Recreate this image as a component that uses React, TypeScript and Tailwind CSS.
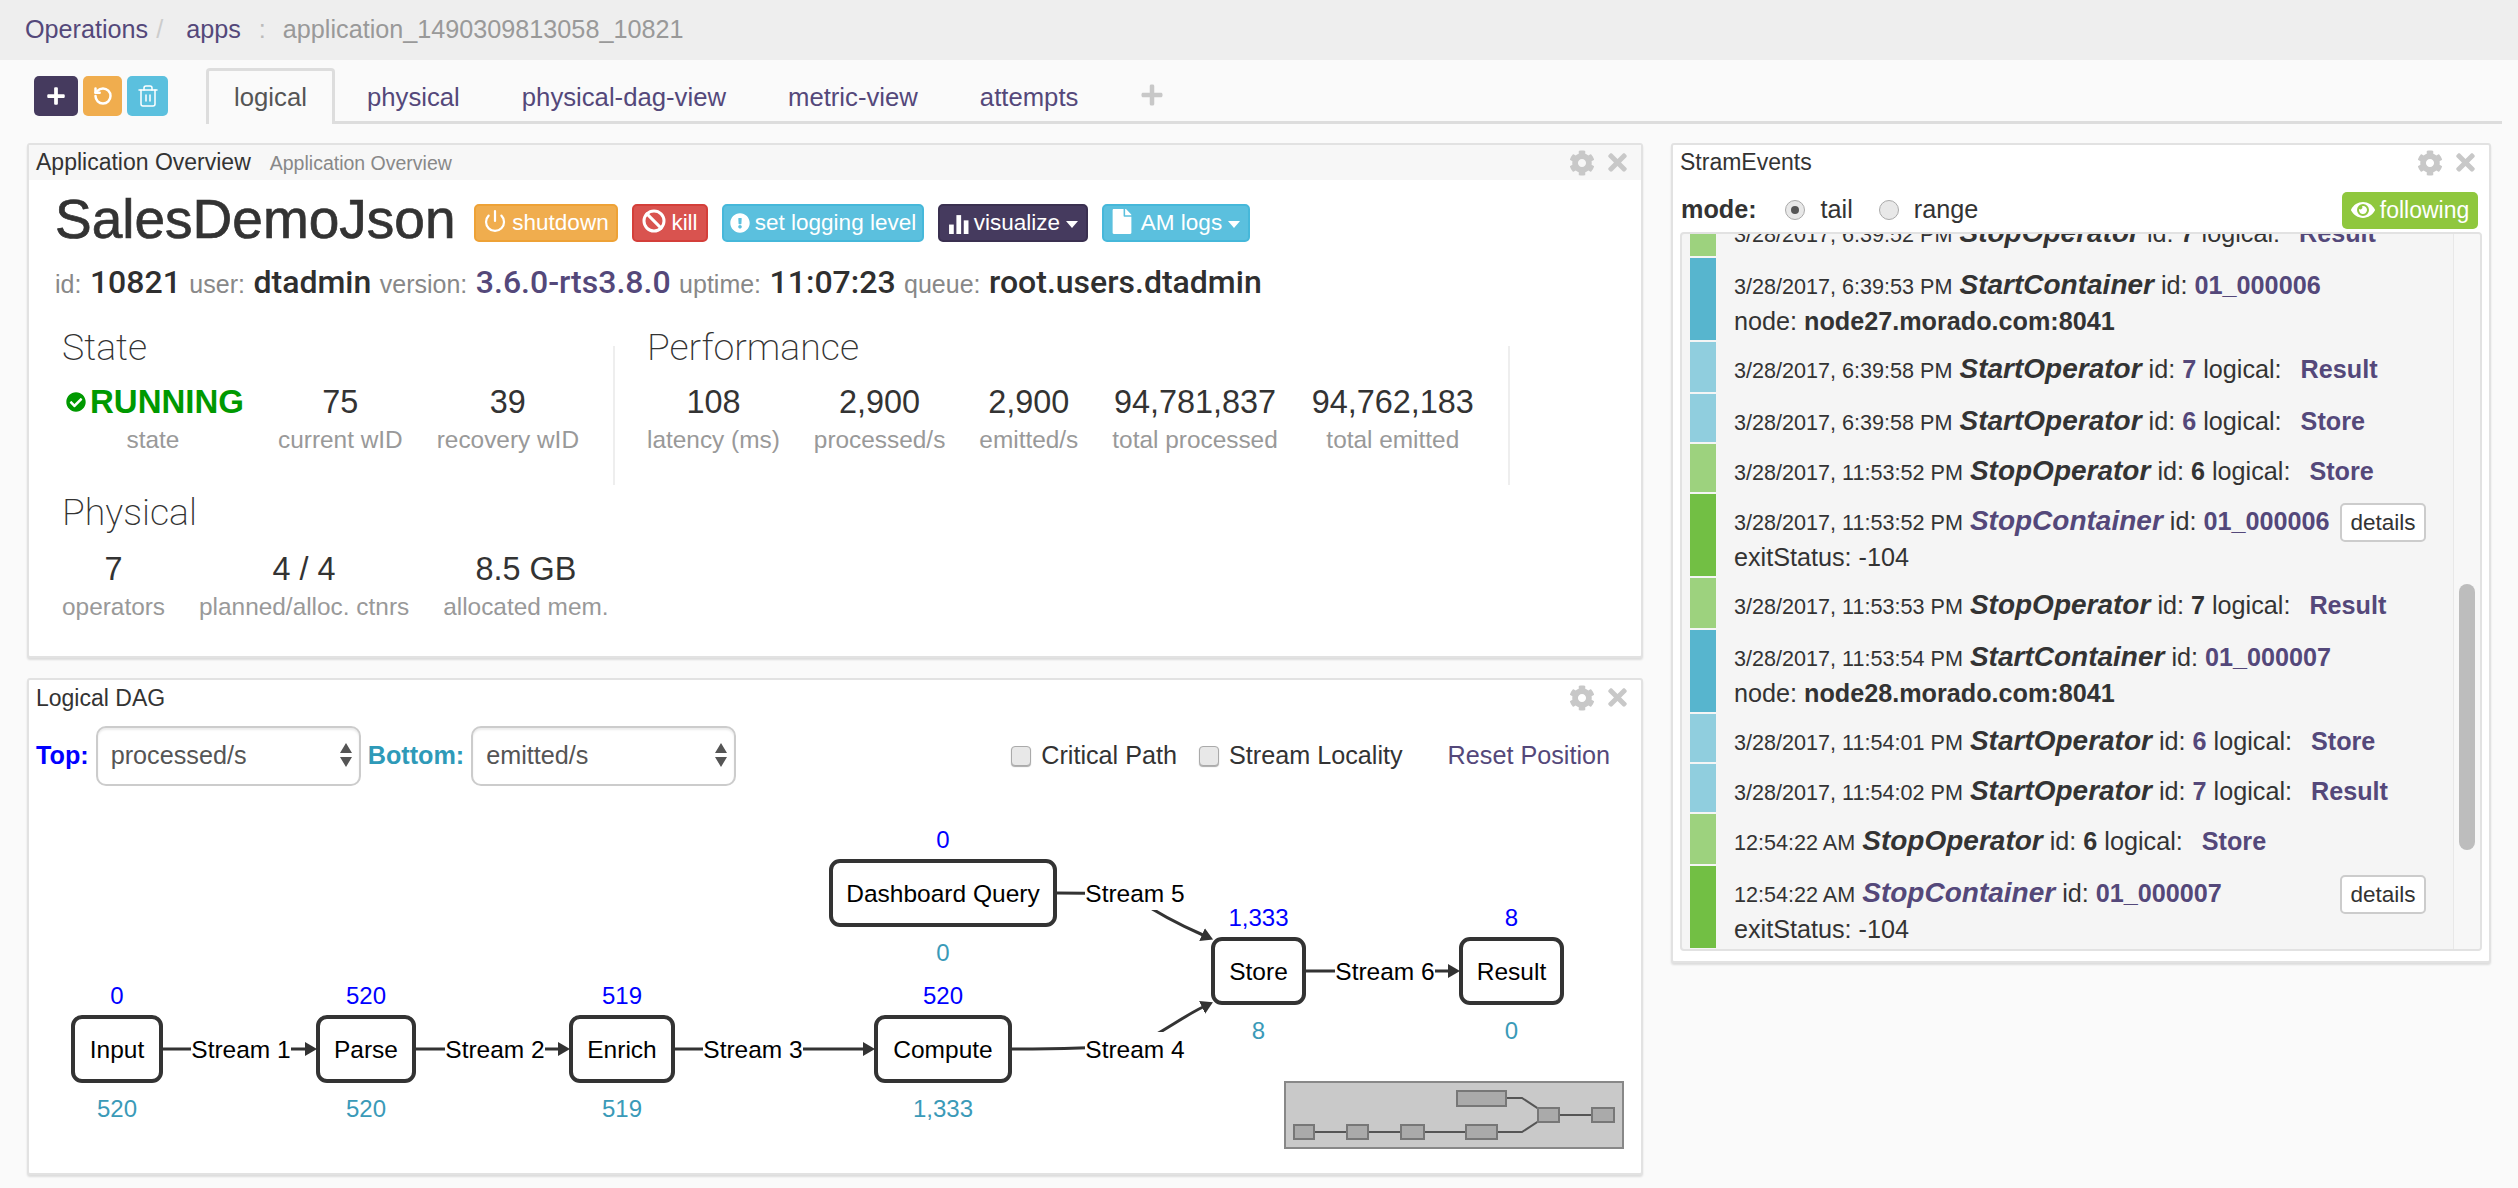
import React from "react";
import { Ban, Power, RotateCcw, Trash2 } from "lucide-react";
import { FaCheckCircle, FaCog, FaExclamationCircle, FaEye, FaFile, FaPlus, FaTimes } from "react-icons/fa";

const Caret = () => <span className="ml-[6px] inline-block h-0 w-0 border-x-[6px] border-t-[7px] border-x-transparent border-t-white align-middle" />;

const PanelTools = () => (
  <div className="flex items-center gap-[9px] text-[#c8c8c8]">
    <FaCog className="h-[26px] w-[26px]" />
    <FaTimes className="h-[27px] w-[27px]" />
  </div>
);

const ActionButton = ({ bg, children }: { bg: string; children: React.ReactNode }) => (
  <button className={`flex h-[38px] items-center justify-center gap-[5px] whitespace-nowrap rounded-[5px] border-2 text-[22.5px] text-white ${bg}`}>
    {children}
  </button>
);

const Stat = ({ value, label }: { value: React.ReactNode; label: string }) => (
  <div className="flex flex-col items-center whitespace-nowrap">
    <div className="flex h-[46px] items-center text-[32.4px] text-[#333]">{value}</div>
    <div className="text-[24.4px] leading-[30px] text-[#999]">{label}</div>
  </div>
);

const Heading = ({ children }: { children: React.ReactNode }) => (
  <h3 className="font-['Roboto',sans-serif] text-[37.5px] font-extralight leading-[44px] text-[#333]">{children}</h3>
);

const Divider = () => <div className="mt-[21px] h-[139px] w-[2px] bg-[#eee]" />;

const InfoLabel = ({ children }: { children: React.ReactNode }) => <span className="text-[25px] text-[#888]">{children}</span>;
const InfoValue = ({ children, purple }: { children: React.ReactNode; purple?: boolean }) => (
  <span className={`font-['Roboto',sans-serif] text-[32px] font-medium ${purple ? "text-[#54487a]" : "text-[#2f2f2f]"}`}>{children}</span>
);

const ApplicationOverview = () => (
  <section className="h-[515px] rounded-[3px] border-2 border-[#e2e2e2] bg-white shadow-[0_2px_2px_#ddd]">
    <header className="flex h-[35px] items-center justify-between bg-[#f7f7f7] pl-[7px] pr-[10px]">
      <div className="flex items-baseline gap-[19px]">
        <span className="text-[23px] text-[#333]">Application Overview</span>
        <span className="text-[19.5px] text-[#888]">Application Overview</span>
      </div>
      <PanelTools />
    </header>
    <div className="px-[26px] pt-[12px]">
      <div className="flex h-[62px] items-center gap-[14px]">
        <h1 className="mr-[4px] w-[401px] -translate-y-[4px] whitespace-nowrap text-[55px] leading-[62px] text-[#333] [-webkit-text-stroke:0.7px_#333]">SalesDemoJson</h1>
        <div className="w-[144px]"><ActionButton bg="w-full border-[#eea236] bg-[#f0ad4e]"><Power className="h-[24px] w-[24px] -translate-y-[2px]" strokeWidth={2.2} />shutdown</ActionButton></div>
        <div className="w-[76px]"><ActionButton bg="w-full border-[#d43f3a] bg-[#d9534f]"><Ban className="h-[24px] w-[24px] -translate-y-[2px]" strokeWidth={3} />kill</ActionButton></div>
        <div className="w-[202px]"><ActionButton bg="w-full border-[#46b8da] bg-[#5bc0de]"><FaExclamationCircle className="h-[20px] w-[20px]" />set logging level</ActionButton></div>
        <div className="w-[150px]"><ActionButton bg="w-full border-[#3a3050] bg-[#453a5e]">
          <svg viewBox="0 0 20 20" className="h-[21px] w-[21px]" fill="white">
            <rect x="1" y="11" width="4.5" height="9" />
            <rect x="8" y="2" width="4.5" height="18" />
            <rect x="15" y="7" width="4.5" height="13" />
          </svg>
          <span>visualize<Caret /></span>
        </ActionButton></div>
        <div className="w-[148px]"><ActionButton bg="w-full border-[#46b8da] bg-[#5bc0de]"><FaFile className="h-[25px] w-[20px] -translate-y-[2px]" /><span className="ml-[4px]">AM logs<Caret /></span></ActionButton></div>
      </div>
      <div className="mt-[4px] flex items-baseline gap-[8.5px] whitespace-nowrap">
        <InfoLabel>id:</InfoLabel><InfoValue>10821</InfoValue>
        <InfoLabel>user:</InfoLabel><InfoValue>dtadmin</InfoValue>
        <InfoLabel>version:</InfoLabel><InfoValue purple>3.6.0-rts3.8.0</InfoValue>
        <InfoLabel>uptime:</InfoLabel><InfoValue>11:07:23</InfoValue>
        <InfoLabel>queue:</InfoLabel><InfoValue>root.users.dtadmin</InfoValue>
      </div>
      <div className="mt-[19px] flex pl-[7px]">
        <div className="w-[551px]">
          <Heading>State</Heading>
          <div className="mt-[10px] flex gap-[34px]">
            <Stat value={<span className="ml-[4px] flex items-center gap-[4px] font-bold text-[#090]"><FaCheckCircle className="h-[20px] w-[20px]" /><span className="text-[33px]">RUNNING</span></span>} label="state" />
            <Stat value="75" label="current wID" />
            <Stat value="39" label="recovery wID" />
          </div>
        </div>
        <Divider />
        <div className="ml-[32px] w-[861px]">
          <Heading>Performance</Heading>
          <div className="mt-[10px] flex gap-[34px]">
            <Stat value="108" label="latency (ms)" />
            <Stat value="2,900" label="processed/s" />
            <Stat value="2,900" label="emitted/s" />
            <Stat value="94,781,837" label="total processed" />
            <Stat value="94,762,183" label="total emitted" />
          </div>
        </div>
        <Divider />
      </div>
      <div className="mt-[5px] pl-[7px]">
        <Heading>Physical</Heading>
        <div className="mt-[12px] flex gap-[34px]">
          <Stat value="7" label="operators" />
          <Stat value="4 / 4" label="planned/alloc. ctnrs" />
          <Stat value="8.5 GB" label="allocated mem." />
        </div>
      </div>
    </div>
  </section>
);

const SelectBox = ({ value, options }: { value: string; options: string[] }) => (
  <div className="relative">
    <select defaultValue={value} className="h-[60px] w-[265px] appearance-none rounded-[10px] border-2 border-[#ccc] bg-white pl-[13px] text-[25.2px] text-[#555] shadow-[inset_0_2px_2px_rgba(0,0,0,0.08)]">
      {options.map((o) => <option key={o}>{o}</option>)}
    </select>
    <svg viewBox="0 0 12 24" className="pointer-events-none absolute right-[9px] top-[17px] h-[24px] w-[12px]" fill="#555">
      <path d="M6 0 L12 10 L0 10 Z M6 24 L12 14 L0 14 Z" />
    </svg>
  </div>
);

const CheckItem = ({ label }: { label: string }) => (
  <label className="flex items-center gap-[10px] text-[25.2px] text-[#333]">
    <input type="checkbox" className="h-[20px] w-[20px] appearance-none rounded-[4px] border border-[#aaa] bg-[#e8e8e8] shadow-[0_1px_1px_#aaa]" />
    {label}
  </label>
);

const NODES = [
  { name: "Input", x: 71, y: 1015, w: 92, top: "0", bottom: "520" },
  { name: "Parse", x: 316, y: 1015, w: 100, top: "520", bottom: "520" },
  { name: "Enrich", x: 569, y: 1015, w: 106, top: "519", bottom: "519" },
  { name: "Compute", x: 874, y: 1015, w: 138, top: "520", bottom: "1,333" },
  { name: "Dashboard Query", x: 829, y: 859, w: 228, top: "0", bottom: "0" },
  { name: "Store", x: 1211, y: 937, w: 95, top: "1,333", bottom: "8" },
  { name: "Result", x: 1459, y: 937, w: 105, top: "8", bottom: "0" },
];

const STREAMS = [
  { name: "Stream 1", x: 241, y: 1049, d: "M163 1049 L306 1049" },
  { name: "Stream 2", x: 495, y: 1049, d: "M416 1049 L559 1049" },
  { name: "Stream 3", x: 753, y: 1049, d: "M675 1049 L864 1049" },
  { name: "Stream 4", x: 1135, y: 1049, d: "M1012 1049 C1060 1049 1095 1048 1135 1045 C1160 1035 1180 1018 1203 1007" },
  { name: "Stream 5", x: 1135, y: 893, d: "M1057 893 C1090 893 1120 893 1135 898 C1160 915 1180 925 1203 935" },
  { name: "Stream 6", x: 1385, y: 971, d: "M1306 971 L1449 971" },
];

const MINI = [
  [1457, 1091, 49, 15],
  [1538, 1108, 21, 14],
  [1592, 1108, 22, 14],
  [1294, 1125, 20, 14],
  [1347, 1125, 21, 14],
  [1401, 1125, 23, 14],
  [1466, 1125, 31, 14],
];

const DagGraph = () => (
  <svg viewBox="29 800 1612 373" className="block h-[373px] w-[1612px]">
    <defs>
      <marker id="head" markerWidth="12" markerHeight="14" refX="1" refY="7" orient="auto" markerUnits="userSpaceOnUse">
        <path d="M0 0 L12 7 L0 14 Z" fill="#333" />
      </marker>
    </defs>
    {STREAMS.map((s) => (
      <g key={s.name}>
        <path d={s.d} fill="none" stroke="#333" strokeWidth="3" markerEnd="url(#head)" />
        <rect x={s.x - 50} y={s.y - 17} width="100" height="34" fill="white" />
        <text x={s.x} y={s.y + 9} textAnchor="middle" fontSize="24.5" fill="#000">{s.name}</text>
      </g>
    ))}
    {NODES.map((n) => (
      <g key={n.name}>
        <rect x={n.x + 2} y={n.y + 2} width={n.w - 4} height="64" rx="9" fill="white" stroke="#333" strokeWidth="4" />
        <text x={n.x + n.w / 2} y={n.y + 43} textAnchor="middle" fontSize="24.5" fill="#000">{n.name}</text>
        <text x={n.x + n.w / 2} y={n.y - 11} textAnchor="middle" fontSize="24" fill="#0000ff">{n.top}</text>
        <text x={n.x + n.w / 2} y={n.y + 102} textAnchor="middle" fontSize="24" fill="#3a9ab8">{n.bottom}</text>
      </g>
    ))}
    <rect x="1285" y="1082" width="338" height="66" fill="#c9c9c9" stroke="#888" strokeWidth="2" />
    <path d="M1314 1132 H1466 M1497 1132 H1522 L1548 1115 M1506 1098 H1522 L1548 1115 H1592" fill="none" stroke="#555" strokeWidth="2" />
    {MINI.map(([x, y, w, h]) => (
      <rect key={x} x={x} y={y} width={w} height={h} fill="#aaa" stroke="#777" strokeWidth="2" />
    ))}
  </svg>
);

const LogicalDag = () => (
  <section className="mt-[20px] h-[497px] rounded-[3px] border-2 border-[#e2e2e2] bg-white shadow-[0_2px_2px_#ddd]">
    <header className="flex h-[35px] items-center justify-between pl-[7px] pr-[10px]">
      <span className="translate-y-[1px] text-[23px] text-[#333]">Logical DAG</span>
      <PanelTools />
    </header>
    <div className="mt-[11px] flex h-[60px] items-center pl-[7px]">
      <span className="mr-[7px] text-[25.2px] font-bold text-[#0000ff]">Top:</span>
      <SelectBox value="processed/s" options={["processed/s", "emitted/s"]} />
      <span className="mx-[7px] text-[25.2px] font-bold text-[#2e9ab8]">Bottom:</span>
      <SelectBox value="emitted/s" options={["processed/s", "emitted/s"]} />
      <div className="ml-[275px] flex items-center gap-[22px]">
        <CheckItem label="Critical Path" />
        <CheckItem label="Stream Locality" />
      </div>
      <a className="ml-[45px] text-[25.2px] text-[#54487a]">Reset Position</a>
    </div>
    <div className="mt-[14px]"><DagGraph /></div>
  </section>
);

type Row = {
  h: string;
  bar: string;
  date: string;
  name: string;
  nameClass?: string;
  id: string;
  idClass?: string;
  logical?: string;
  second?: React.ReactNode;
  details?: boolean;
};

const PURPLE = "text-[#54487a]";
const DARK = "text-[#333]";
const LIGHT_GREEN = "bg-[#9dd27e]";
const GREEN = "bg-[#72bf44]";
const BLUE = "bg-[#57b5ce]";
const LIGHT_BLUE = "bg-[#90cede]";

const NodeLine = ({ host }: { host: string }) => <>node: <b>{host}</b></>;

const ROWS: Row[] = [
  { h: "h-[50px]", bar: LIGHT_GREEN, date: "3/28/2017, 6:39:52 PM", name: "StopOperator", id: "7", idClass: DARK, logical: "Result" },
  { h: "h-[82px]", bar: BLUE, date: "3/28/2017, 6:39:53 PM", name: "StartContainer", id: "01_000006", idClass: PURPLE, second: <NodeLine host="node27.morado.com:8041" /> },
  { h: "h-[50px]", bar: LIGHT_BLUE, date: "3/28/2017, 6:39:58 PM", name: "StartOperator", id: "7", idClass: PURPLE, logical: "Result" },
  { h: "h-[48px]", bar: LIGHT_BLUE, date: "3/28/2017, 6:39:58 PM", name: "StartOperator", id: "6", idClass: PURPLE, logical: "Store" },
  { h: "h-[48px]", bar: LIGHT_GREEN, date: "3/28/2017, 11:53:52 PM", name: "StopOperator", id: "6", idClass: DARK, logical: "Store" },
  { h: "h-[82px]", bar: GREEN, date: "3/28/2017, 11:53:52 PM", name: "StopContainer", nameClass: PURPLE, id: "01_000006", idClass: PURPLE, second: "exitStatus: -104", details: true },
  { h: "h-[50px]", bar: LIGHT_GREEN, date: "3/28/2017, 11:53:53 PM", name: "StopOperator", id: "7", idClass: DARK, logical: "Result" },
  { h: "h-[82px]", bar: BLUE, date: "3/28/2017, 11:53:54 PM", name: "StartContainer", id: "01_000007", idClass: PURPLE, second: <NodeLine host="node28.morado.com:8041" /> },
  { h: "h-[48px]", bar: LIGHT_BLUE, date: "3/28/2017, 11:54:01 PM", name: "StartOperator", id: "6", idClass: PURPLE, logical: "Store" },
  { h: "h-[48px]", bar: LIGHT_BLUE, date: "3/28/2017, 11:54:02 PM", name: "StartOperator", id: "7", idClass: PURPLE, logical: "Result" },
  { h: "h-[50px]", bar: LIGHT_GREEN, date: "12:54:22 AM", name: "StopOperator", id: "6", idClass: DARK, logical: "Store" },
  { h: "h-[82px]", bar: GREEN, date: "12:54:22 AM", name: "StopContainer", nameClass: PURPLE, id: "01_000007", idClass: PURPLE, second: "exitStatus: -104", details: true },
];

const EventRow = ({ row }: { row: Row }) => (
  <div className={`flex ${row.h}`}>
    <div className={`w-[26px] shrink-0 ${row.bar}`} />
    <div className="flex min-w-0 flex-1 justify-between pl-[18px] pr-[27px] pt-[9px] text-[25.2px] leading-[35px] text-[#333]">
      <div className="whitespace-nowrap">
        <div className="flex items-baseline">
          <span className="text-[21.6px]">{row.date}</span>
          <span className={`mx-[7px] text-[28px] font-bold italic ${row.nameClass ?? ""}`}>{row.name}</span>
          <span>id:&nbsp;</span>
          <b className={row.idClass}>{row.id}</b>
          {row.logical && (
            <>
              <span>&nbsp;logical:</span>
              <b className={`ml-[19px] ${PURPLE}`}>{row.logical}</b>
            </>
          )}
        </div>
        {row.second && <div>{row.second}</div>}
      </div>
      {row.details && (
        <button className="h-[39px] w-[86px] shrink-0 rounded-[5px] border-2 border-[#ccc] bg-white text-[22.5px] text-[#333]">details</button>
      )}
    </div>
  </div>
);

const StramEvents = () => (
  <section className="h-[820px] w-[820px] shrink-0 rounded-[3px] border-2 border-[#e2e2e2] bg-white shadow-[0_2px_2px_#ddd]">
    <header className="flex h-[35px] items-center justify-between pl-[7px] pr-[10px]">
      <span className="text-[23px] text-[#333]">StramEvents</span>
      <PanelTools />
    </header>
    <div className="flex h-[52px] items-center justify-between pl-[8px] pr-[11px] pt-[8px]">
      <div className="flex items-center text-[25.2px] text-[#333]">
        <b className="mr-[28px]">mode:</b>
        <span className="mr-[16px] flex h-[20px] w-[20px] items-center justify-center rounded-full border border-[#aaa] bg-[#e8e8e8]">
          <span className="h-[8px] w-[8px] rounded-full bg-[#555]" />
        </span>
        <span className="mr-[26px]">tail</span>
        <span className="mr-[15px] h-[20px] w-[20px] rounded-full border border-[#aaa] bg-[#e8e8e8]" />
        <span>range</span>
      </div>
      <button className="flex h-[37px] w-[136px] items-center justify-center gap-[5px] rounded-[5px] bg-[#8fc73e] text-[23px] text-white">
        <FaEye className="h-[24px] w-[24px]" />following
      </button>
    </div>
    <div className="mx-[7px] flex h-[719px] overflow-hidden rounded-[4px] border-2 border-[#e2e2e2] bg-[#f5f5f5]">
      <div className="flex-1 overflow-hidden pl-[8px]">
        <div className="-mt-[28px] flex flex-col gap-[2px]">
          {ROWS.map((row, i) => <EventRow key={i} row={row} />)}
        </div>
      </div>
      <div className="w-[27px] shrink-0 border-l border-[#e8e8e8] bg-[#f7f7f7] pl-[5px] pt-[350px]">
        <div className="h-[266px] w-[16px] rounded-full bg-[#bdbdbd]" />
      </div>
    </div>
  </section>
);

const TABS = ["physical", "physical-dag-view", "metric-view", "attempts"];

export default function App() {
  return (
    <div className="min-h-[1188px] bg-[#fafafa] font-['Liberation_Sans',Arial,sans-serif]">
      <nav className="flex h-[60px] items-center whitespace-nowrap bg-[#eee] pl-[25px] text-[25.2px]">
        <a className="text-[#54487a]">Operations</a>
        <span className="ml-[8px] text-[#ccc]">/</span>
        <a className="ml-[23px] text-[#54487a]">apps</a>
        <span className="ml-[18px] text-[#bbb]">:</span>
        <span className="ml-[17px] text-[#999]">application_1490309813058_10821</span>
      </nav>
      <div className="ml-[34px] mr-[16px] mt-[8px] flex h-[56px] items-stretch">
        <div className="mt-[8px] flex h-[40px] gap-[5px] text-white">
          <button className="flex w-[44px] items-center justify-center rounded-[5px] bg-[#453a5e]"><FaPlus className="h-[20px] w-[20px]" /></button>
          <button className="flex w-[39px] items-center justify-center rounded-[5px] bg-[#f0ad4e]"><RotateCcw className="h-[20px] w-[20px]" strokeWidth={3} /></button>
          <button className="flex w-[41px] items-center justify-center rounded-[5px] bg-[#5bc0de]"><Trash2 className="h-[24px] w-[24px]" strokeWidth={1.5} /></button>
        </div>
        <div className="ml-[38px] flex flex-1 gap-[8px] border-b-[3px] border-[#ddd] text-[25.7px]">
          <a className="-mb-[3px] -mr-[3px] flex w-[129px] items-center justify-center rounded-t-[4px] border-x-[3px] border-t-[3px] border-[#ddd] bg-[#fafafa] text-[#555]">logical</a>
          {TABS.map((t) => (
            <a key={t} className="flex items-center px-[27px] pt-[6px] text-[#54487a]">{t}</a>
          ))}
          <a className="flex items-center px-[27px] text-[#c8c8c8]"><FaPlus className="h-[24px] w-[24px]" /></a>
        </div>
      </div>
      <main className="mt-[19px] flex gap-[28px] pl-[27px]">
        <div className="w-[1616px] shrink-0">
          <ApplicationOverview />
          <LogicalDag />
        </div>
        <StramEvents />
      </main>
    </div>
  );
}
